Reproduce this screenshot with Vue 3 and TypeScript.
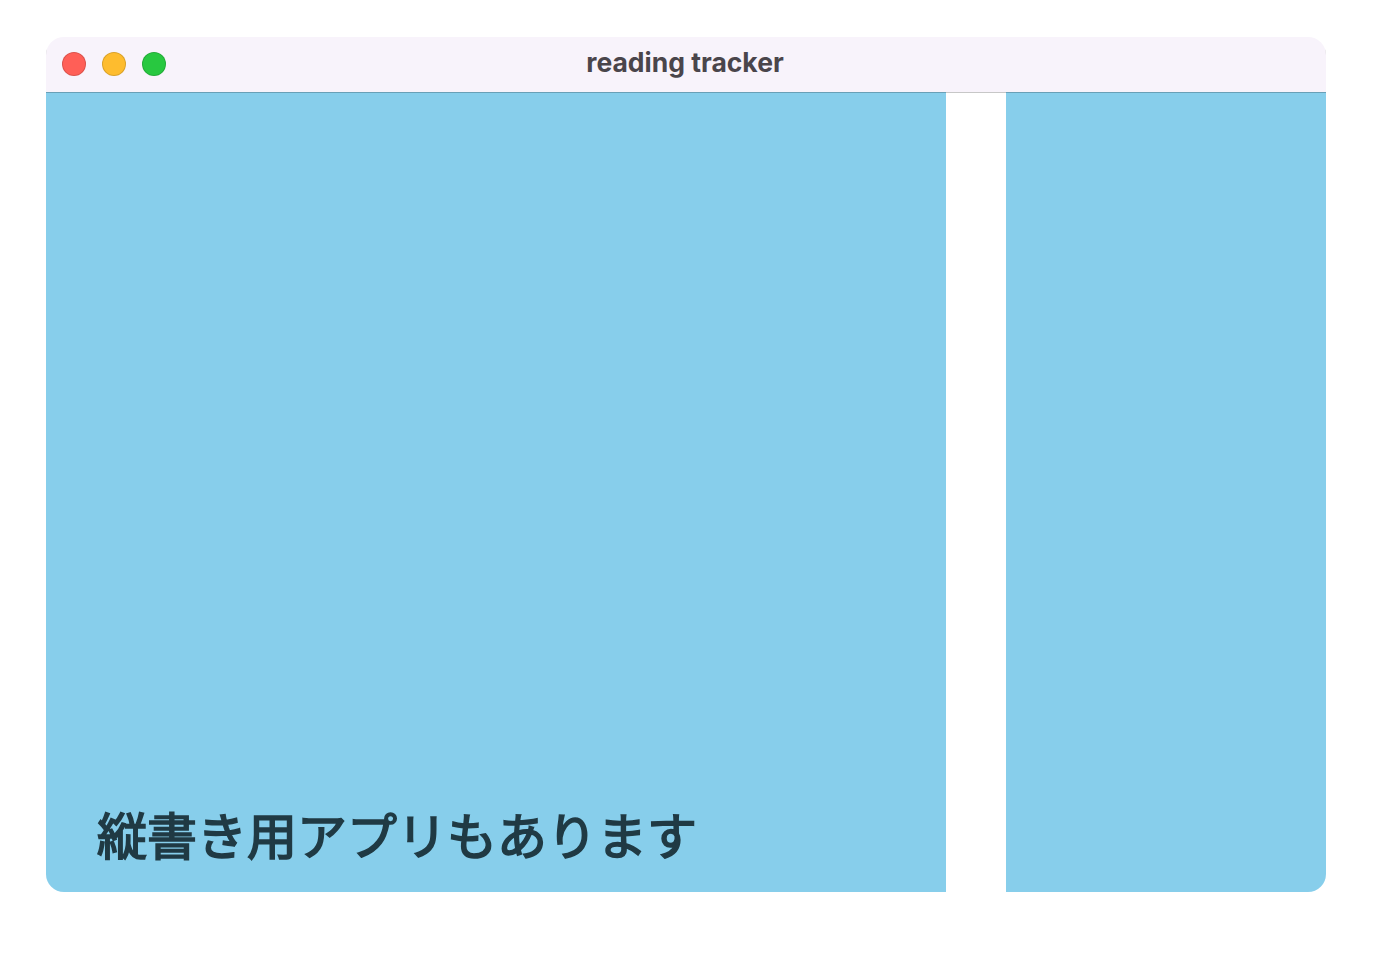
<script setup lang="ts">
const title = "reading tracker";
const lights = ["red", "yellow", "green"];
</script>

<template>
    <div class="page">
        <div class="window">
            <div class="titlebar">
                <div class="lights">
                    <span v-for="l in lights" :key="l" :class="['light', l]"></span>
                </div>
                <div class="title">{{ title }}</div>
            </div>
            <div class="content">
                <div class="pane main">
                    <p class="caption">縦書き用アプリもあります</p>
                </div>
                <div class="pane side"></div>
            </div>
        </div>
    </div>
</template>

<style scoped>
.page {
    height: 970px;
    padding: 37px 0 0 46px;
    box-sizing: border-box;
    background: #fff;
}
.window {
    width: 1280px;
    height: 855px;
    display: flex;
    flex-direction: column;
    border-radius: 18px;
    overflow: hidden;
}
.titlebar {
    position: relative;
    z-index: 1;
    flex: 0 0 55px;
    display: flex;
    align-items: center;
    justify-content: center;
    background: #f8f3fb;
    box-shadow: 0 1px 0 rgba(0, 0, 0, 0.22);
}
.lights {
    position: absolute;
    left: 16px;
    top: 15px;
    display: flex;
    gap: 16px;
}
.light {
    width: 24px;
    height: 24px;
    box-sizing: border-box;
    border-radius: 50%;
    border: 1px solid rgba(0, 0, 0, 0.14);
}
.red { background: #ff5f57; }
.yellow { background: #febc2e; }
.green { background: #28c840; }
.title {
    font-family: Inter, "Liberation Sans", sans-serif;
    font-size: 26.5px;
    font-weight: 700;
    color: #4a454b;
    margin: -5px 2px 0 0;
}
.content {
    flex: 1;
    display: flex;
    gap: 60px;
}
.pane {
    background: #87ceeb;
}
.main {
    width: 900px;
    display: flex;
    align-items: flex-end;
}
.side {
    width: 320px;
}
.caption {
    margin: 0 0 25px 51px;
    font-family: "Noto Sans CJK JP", sans-serif;
    font-size: 50px;
    line-height: 68px;
    font-weight: 400;
    -webkit-text-stroke: 1.7px #203a44;
    color: #203a44;
}
</style>
